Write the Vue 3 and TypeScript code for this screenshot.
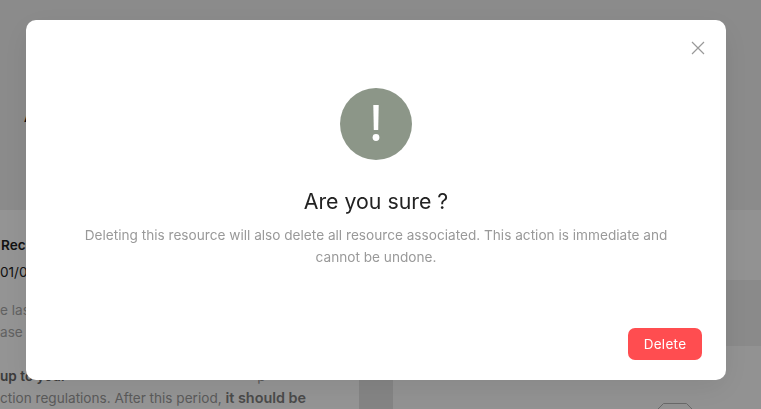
<script setup lang="ts">
const title = 'Are you sure ?'
const message = 'Deleting this resource will also delete all resource associated. This action is immediate and cannot be undone.'
</script>

<template>
  <div class="page">
    <header class="top">
      <span class="top-title">Account</span>
    </header>
    <div class="columns">
      <section class="left-card">
        <p class="name">Recovery</p>
        <p class="date">01/01/2021</p>
        <p class="muted first">e last</p>
        <p class="muted">ase</p>
        <p class="strong"><b>up to your</b><span class="tail">p</span></p>
        <p class="muted last">ction regulations. After this period, <b>it should be</b></p>
      </section>
      <section class="right-col">
        <div class="band band-a"></div>
        <div class="band band-b"></div>
        <div class="band band-c">
          <svg class="hex" width="36" height="8" viewBox="0 0 36 8" fill="none" stroke="#b4b4b4" stroke-width="1">
            <path d="M0.500 7.500l6-6h23l6 6" />
          </svg>
        </div>
      </section>
    </div>
  </div>

  <div class="overlay">
    <div class="modal">
      <button class="close" aria-label="Close">
        <svg width="14" height="14" viewBox="0 0 14 14" fill="none" stroke="#999" stroke-width="1.200">
          <path d="M1 1l12 12M13 1L1 13" />
        </svg>
      </button>
      <div class="alert-icon">
        <svg width="72" height="72" viewBox="0 0 72 72" fill="#fff">
          <path d="M33.300 17h5.400l-0.500 25h-4.400z" />
          <circle cx="36" cy="49.500" r="3.400" />
        </svg>
      </div>
      <h2 class="title">{{ title }}</h2>
      <p class="message">{{ message }}</p>
      <div class="actions">
        <button class="delete">Delete</button>
      </div>
    </div>
  </div>
</template>

<style scoped>
.page {
  width: 761px;
  height: 409px;
  overflow: hidden;
  background: #e4e4e4;
  font-family: Inter, "Liberation Sans", sans-serif;
  font-size: 14px;
  color: #222;
}
.top {
  height: 210px;
  padding: 108px 0 0 24px;
  box-sizing: border-box;
  background: #efefef;
}
.top-title {
  font-size: 14px;
  font-weight: 500;
  color: #111;
}
.columns {
  display: grid;
  grid-template-columns: 359px 1fr;
  gap: 34px;
  height: 199px;
}
.left-card {
  background: #fff;
  overflow: hidden;
  padding-top: 26px;
  white-space: nowrap;
  font-size: 13.600px;
}
.left-card p {
  margin: 0;
}
.name {
  padding-left: 1px;
  font-weight: 600;
  line-height: 18px;
}
.date {
  padding-top: 9px;
  line-height: 18px;
}
.muted {
  color: #a8a8a8;
  line-height: 22px;
}
.last {
  color: #9b9b9b;
}
.last b {
  font-size: 14.400px;
  font-weight: 600;
  color: #808080;
}
.left-card .first {
  margin-top: 18px;
}
.left-card .strong {
  margin-top: 22px;
  color: #666;
  line-height: 22px;
}
.strong b {
  font-weight: 600;
}
.tail {
  margin-left: 191px;
  color: #999;
}
.right-col {
  display: flex;
  flex-direction: column;
}
.band-a {
  height: 70px;
  background: #fcfcfc;
}
.band-b {
  height: 66px;
  background: #eeeeee;
}
.band-c {
  flex: 1;
  position: relative;
  background: #fcfcfc;
}
.hex {
  position: absolute;
  left: 264px;
  top: 56px;
}
.overlay {
  position: fixed;
  inset: 0;
  display: flex;
  align-items: flex-start;
  padding: 20px 0 0 26px;
  background: rgba(0, 0, 0, 0.42);
  font-family: Inter, "Liberation Sans", sans-serif;
}
.modal {
  position: relative;
  width: 700px;
  height: 360px;
  padding-top: 68px;
  box-sizing: border-box;
  background: #fff;
  border-radius: 10px;
  box-shadow: 0 8px 30px rgba(0, 0, 0, 0.08);
  display: flex;
  flex-direction: column;
  align-items: center;
}
.close {
  position: absolute;
  top: 21px;
  right: 21px;
  width: 14px;
  height: 14px;
  padding: 0;
  border: none;
  background: none;
  line-height: 0;
}
.alert-icon {
  width: 72px;
  height: 72px;
  border-radius: 50%;
  background: #8c9688;
  line-height: 0;
}
.title {
  margin: 27px 0 0;
  font-size: 21.300px;
  font-weight: 400;
  line-height: 28px;
  color: #222;
}
.message {
  width: 600px;
  margin: 9px 0 0;
  font-size: 13.640px;
  line-height: 22px;
  text-align: center;
  color: #999;
}
.actions {
  align-self: flex-end;
  margin-top: auto;
  padding: 0 24px 20px 0;
}
.delete {
  width: 74px;
  height: 32px;
  border: none;
  border-radius: 7px;
  background: #ff4d50;
  color: #fff;
  font-family: inherit;
  font-size: 13.500px;
  letter-spacing: 0.3px;
}
</style>

<style>
html, body { margin: 0; overflow: hidden; }
</style>
